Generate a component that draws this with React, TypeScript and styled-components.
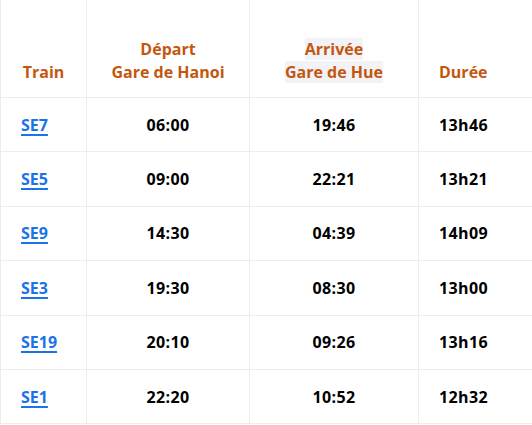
import { createGlobalStyle, styled } from 'styled-components';

interface ITrain {
  code: string;
  depart: string;
  arrivee: string;
  duree: string;
}

const trains: ITrain[] = [
  { code: 'SE7', depart: '06:00', arrivee: '19:46', duree: '13h46' },
  { code: 'SE5', depart: '09:00', arrivee: '22:21', duree: '13h21' },
  { code: 'SE9', depart: '14:30', arrivee: '04:39', duree: '14h09' },
  { code: 'SE3', depart: '19:30', arrivee: '08:30', duree: '13h00' },
  { code: 'SE19', depart: '20:10', arrivee: '09:26', duree: '13h16' },
  { code: 'SE1', depart: '22:20', arrivee: '10:52', duree: '12h32' },
];

export default function App() {
  return (
    <>
      <GlobalStyle />
      <Table>
        <colgroup>
          <Col $width={86} />
          <Col $width={163} />
          <Col $width={169} />
          <Col $width={114} />
        </colgroup>
        <thead>
          <tr>
            <HeadCell>Train</HeadCell>
            <HeadCell>
              Départ
              <br />
              Gare de Hanoi
            </HeadCell>
            <HeadCell>
              <Highlight>Arrivée</Highlight>
              <br />
              <Highlight>Gare de Hue</Highlight>
            </HeadCell>
            <HeadCell $align="left">Durée</HeadCell>
          </tr>
        </thead>
        <tbody>
          {trains.map(t => (
            <Row key={t.code}>
              <Cell $align="left">
                <TrainLink href="#">{t.code}</TrainLink>
              </Cell>
              <Cell>{t.depart}</Cell>
              <Cell>{t.arrivee}</Cell>
              <Cell $align="left">{t.duree}</Cell>
            </Row>
          ))}
        </tbody>
      </Table>
    </>
  );
}

const GlobalStyle = createGlobalStyle`
  body {
    margin: 0;
    background: #ffffff;
    font-family: 'Open Sans', 'Noto Sans', sans-serif;
  }
`;

const Table = styled.table`
  width: 532px;
  table-layout: fixed;
  border-collapse: collapse;
  font-size: 16px;
  font-weight: 700;
`;

const Col = styled.col<{ $width: number }>`
  width: ${({ $width }) => $width}px;
`;

const HeadCell = styled.th<{ $align?: 'left' | 'center' }>`
  height: 84px;
  padding: 0 0 13px ${({ $align }) => ($align === 'left' ? '20px' : '0')};
  vertical-align: bottom;
  text-align: ${({ $align }) => $align ?? 'center'};
  line-height: 23px;
  color: #c4570f;
  font-weight: 700;
  border-left: 1px solid #ececec;
  border-bottom: 1px solid #ececec;
`;

const Highlight = styled.span`
  background: #f3f3f7;
`;

const Row = styled.tr`
  height: 54.4px;
`;

const Cell = styled.td<{ $align?: 'left' | 'center' }>`
  padding: 0 0 0 ${({ $align }) => ($align === 'left' ? '20px' : '0')};
  text-align: ${({ $align }) => $align ?? 'center'};
  vertical-align: middle;
  color: #000000;
  letter-spacing: 0.4px;
  border-left: 1px solid #ececec;
  border-bottom: 1px solid #ececec;
`;

const TrainLink = styled.a`
  color: #1a73e8;
  letter-spacing: 0;
  text-decoration: underline;
  text-underline-offset: 3px;
  text-decoration-thickness: 2px;
`;
